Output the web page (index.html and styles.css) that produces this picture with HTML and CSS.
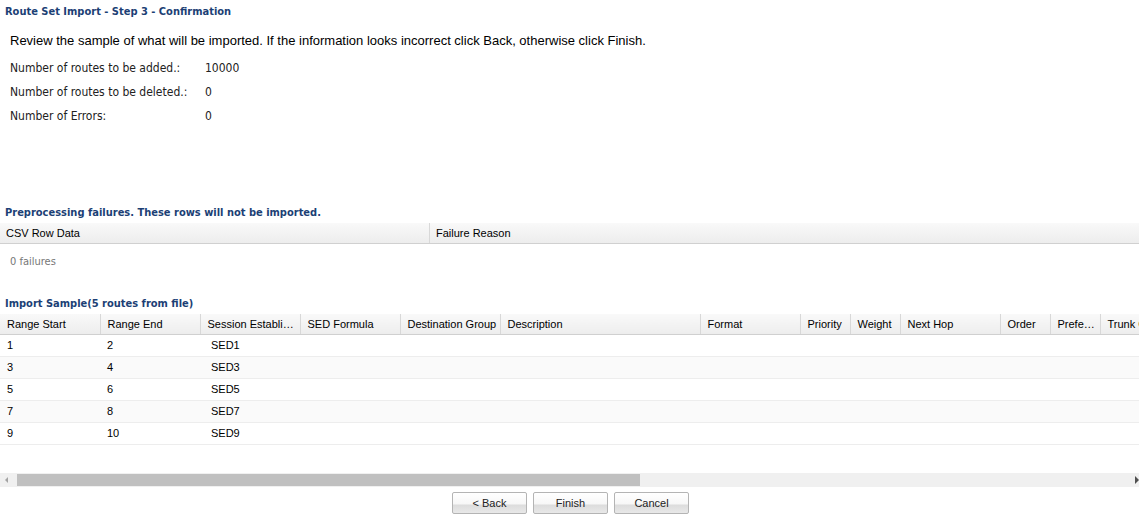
FILE: index.html
```html
<!DOCTYPE html>
<html lang="en">
<head>
    <meta charset="UTF-8">
    <title>Route Set Import - Step 3 - Confirmation</title>
    <link rel="stylesheet" href="styles.css">
</head>
<body>

    <div class="page">
        <h1 class="panel-title">Route Set Import - Step 3 - Confirmation</h1>

        <div class="summary">
            <p class="intro">Review the sample of what will be imported. If the information looks incorrect click Back, otherwise click Finish.</p>
            <div class="stat"><span class="stat-label">Number of routes to be added.:</span><span>10000</span></div>
            <div class="stat"><span class="stat-label">Number of routes to be deleted.:</span><span>0</span></div>
            <div class="stat"><span class="stat-label">Number of Errors:</span><span>0</span></div>
        </div>

        <!-- Falhas -->
        <h2 class="panel-title">Preprocessing failures. These rows will not be imported.</h2>
        <div class="grid-head">
            <div class="hcell csv">CSV Row Data</div>
            <div class="hcell reason">Failure Reason</div>
        </div>
        <div class="empty">0 failures</div>

        <!-- Amostra -->
        <h2 class="panel-title sample-title">Import Sample(5 routes from file)</h2>
        <div class="sample">
            <table class="grid">
                <colgroup>
                    <col class="w100"><col class="w100"><col class="w100"><col class="w100"><col class="w100">
                    <col class="w200"><col class="w100"><col class="w50"><col class="w50"><col class="w100">
                    <col class="w50"><col class="w50"><col class="w100"><col class="w100"><col class="w100">
                    <col class="w100"><col class="w100"><col class="w100">
                </colgroup>
                <thead>
                    <tr>
                        <th>Range Start</th><th>Range End</th><th>Session Establishment Data</th><th>SED Formula</th>
                        <th class="fit">Destination Group</th><th>Description</th><th>Format</th><th>Priority</th>
                        <th>Weight</th><th>Next Hop</th><th>Order</th><th>Preference</th>
                        <th>Trunk Group</th><th>Trunk Context</th><th>Route Type</th><th>Status</th><th>Notes</th><th>Source</th>
                    </tr>
                </thead>
                <tbody>
                    <tr><td>1</td><td>2</td><td class="sed">SED1</td><td></td><td></td><td></td><td></td><td></td><td></td><td></td><td></td><td></td><td></td><td></td><td></td><td></td><td></td><td></td></tr>
                    <tr><td>3</td><td>4</td><td class="sed">SED3</td><td></td><td></td><td></td><td></td><td></td><td></td><td></td><td></td><td></td><td></td><td></td><td></td><td></td><td></td><td></td></tr>
                    <tr><td>5</td><td>6</td><td class="sed">SED5</td><td></td><td></td><td></td><td></td><td></td><td></td><td></td><td></td><td></td><td></td><td></td><td></td><td></td><td></td><td></td></tr>
                    <tr><td>7</td><td>8</td><td class="sed">SED7</td><td></td><td></td><td></td><td></td><td></td><td></td><td></td><td></td><td></td><td></td><td></td><td></td><td></td><td></td><td></td></tr>
                    <tr><td>9</td><td>10</td><td class="sed">SED9</td><td></td><td></td><td></td><td></td><td></td><td></td><td></td><td></td><td></td><td></td><td></td><td></td><td></td><td></td><td></td></tr>
                </tbody>
            </table>
        </div>

        <div class="hscroll">
            <span class="arrow-left"></span>
            <div class="thumb"></div>
            <span class="arrow-right"></span>
        </div>

        <div class="buttons">
            <button class="btn">&lt; Back</button>
            <button class="btn">Finish</button>
            <button class="btn">Cancel</button>
        </div>
    </div>

    <div class="bottom-strip"></div>

</body>
</html>
```

FILE: styles.css
```css
* {
    margin: 0;
    padding: 0;
    box-sizing: border-box;
}
body {
    background: #fff;
    font-family: 'Liberation Sans', Arial, sans-serif;
    font-size: 11px;
    color: #000;
    overflow: hidden;
}
.page {
    height: 516px;
}
.panel-title {
    font-family: 'DejaVu Sans Condensed', 'DejaVu Sans', sans-serif;
    font-weight: bold;
    font-size: 11px;
    line-height: 14px;
    color: #1c3f75;
    padding-left: 5px;
}
h1.panel-title {
    margin-top: 5px;
}
.summary {
    height: 174px;
    padding-left: 10px;
}
.intro {
    margin-top: 13px;
    font-size: 13px;
    line-height: 18px;
}
.stat {
    display: flex;
    font-family: 'DejaVu Sans Condensed', 'DejaVu Sans', sans-serif;
    font-size: 12px;
    line-height: 24px;
    color: #222;
}
.intro + .stat {
    margin-top: 6px;
}
.stat-label {
    width: 195px;
}
.grid-head {
    display: flex;
    margin-top: 3px;
    height: 21px;
    background: linear-gradient(#f9f9f9, #ededed);
    border-bottom: 1px solid #d0d0d0;
}
.hcell {
    line-height: 20px;
    padding-left: 6px;
    white-space: nowrap;
    overflow: hidden;
    text-overflow: ellipsis;
}
.hcell.csv {
    width: 430px;
    border-right: 1px solid #d8d8d8;
}
.hcell.reason {
    flex: 1;
}
.empty {
    font-family: 'DejaVu Sans Condensed', 'DejaVu Sans', sans-serif;
    color: #777;
    padding: 11px 10px 0;
    line-height: 14px;
    height: 53px;
}
.sample {
    margin-top: 3px;
    height: 159px;
    overflow: hidden;
}
.grid {
    table-layout: fixed;
    border-collapse: collapse;
    width: 1700px;
}
.w50 { width: 50px; }
.w100 { width: 100px; }
.w200 { width: 200px; }
.grid th {
    height: 20px;
    font-weight: normal;
    text-align: left;
    padding: 0 4px 0 7px;
    background: linear-gradient(#f9f9f9, #ededed);
    border-right: 1px solid #d8d8d8;
    border-bottom: 1px solid #d0d0d0;
    white-space: nowrap;
    overflow: hidden;
    text-overflow: ellipsis;
}
.grid th.fit {
    padding-right: 0;
}
.grid td {
    height: 22px;
    padding: 0 7px;
    border-bottom: 1px solid #ededed;
    white-space: nowrap;
    overflow: hidden;
}
.grid td.sed {
    padding-left: 11px;
}
.grid tbody tr:nth-child(even) td {
    background: #fafafa;
}
.hscroll {
    display: flex;
    align-items: center;
    height: 14px;
    background: #f0f0f0;
    position: relative;
}
.thumb {
    margin-left: 17px;
    width: 623px;
    height: 12px;
    background: #c0c0c0;
}
.arrow-left {
    position: absolute;
    left: 5px;
    top: 4px;
    border-style: solid;
    border-width: 3px 3px 3px 0;
    border-color: transparent #a3a3a3 transparent transparent;
}
.arrow-right {
    position: absolute;
    right: 0;
    top: 3px;
    border-style: solid;
    border-width: 4px 0 4px 4px;
    border-color: transparent transparent transparent #505050;
}
.buttons {
    display: flex;
    justify-content: center;
    gap: 6px;
    margin-top: 5px;
    padding-left: 2px;
}
.btn {
    width: 75px;
    height: 22px;
    font-family: 'Liberation Sans', Arial, sans-serif;
    font-size: 11px;
    color: #222;
    border: 1px solid #b4b4b4;
    border-radius: 2px;
    background: linear-gradient(#fff 0%, #f7f7f7 55%, #dcdcdc 60%, #e8e8e8 100%);
    cursor: pointer;
}
.bottom-strip {
    height: 3px;
    background: #dfe8f6;
}
```
